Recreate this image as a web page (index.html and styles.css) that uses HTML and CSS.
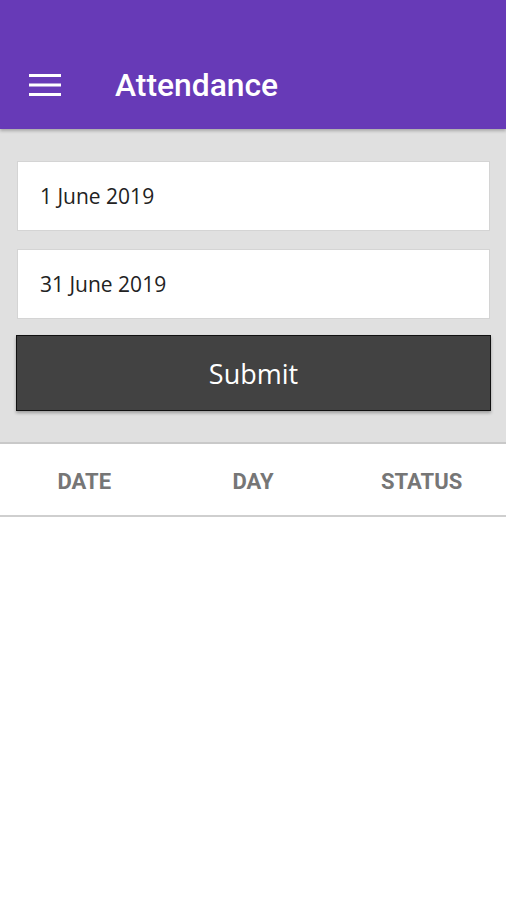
FILE: index.html
```html
<!DOCTYPE html>
<html lang="en">

<head>
    <meta charset="UTF-8">
    <title>Attendance</title>
    <link rel="stylesheet" href="styles.css">
</head>

<body>
    <header class="app-bar">
        <button class="menu-button" aria-label="Menu">
            <svg width="32" height="22" viewBox="0 0 32 22">
                <rect x="0" y="0" width="32" height="3" fill="#fff" />
                <rect x="0" y="9.5" width="32" height="3" fill="#fff" />
                <rect x="0" y="19" width="32" height="3" fill="#fff" />
            </svg>
        </button>
        <h1 class="title">Attendance</h1>
    </header>

    <div class="filter-panel">
        <div class="date-field">1 June 2019</div>
        <div class="date-field">31 June 2019</div>
        <button class="submit-button">Submit</button>
    </div>

    <div class="table-head">
        <div class="col">DATE</div>
        <div class="col">DAY</div>
        <div class="col">STATUS</div>
    </div>
</body>

</html>
```

FILE: styles.css
```css
body {
    margin: 0;
    background-color: #ffffff;
    font-family: "Open Sans", "Noto Sans", sans-serif;
}

.app-bar {
    height: 129px;
    background-color: #673ab7;
    display: flex;
    align-items: flex-end;
    padding: 0 0 27px 29px;
    box-sizing: border-box;
    box-shadow: 0 2px 3px rgba(0, 0, 0, 0.25);
    position: relative;
    z-index: 1;
}

.menu-button {
    background: none;
    border: none;
    padding: 0;
    width: 32px;
    height: 22px;
    margin-bottom: 6px;
    display: flex;
}

.title {
    margin: 0 0 0 54px;
    font-family: Roboto, "Liberation Sans", sans-serif;
    font-weight: 500;
    font-size: 31.8px;
    line-height: 1;
    color: #ffffff;
}

.filter-panel {
    background-color: #e0e0e0;
    padding: 32px 15px 31px 16px;
    display: flex;
    flex-direction: column;
    border-bottom: 2px solid #c9c9c9;
}

.date-field {
    background: #ffffff;
    border: 1px solid #d4d4d4;
    height: 68px;
    margin: 0 1px 18px 1px;
    padding-left: 22px;
    display: flex;
    align-items: center;
    font-size: 21px;
    color: #222222;
}

.date-field + .date-field {
    margin-bottom: 16px;
}

.submit-button {
    height: 76px;
    background-color: #424242;
    border: 1px solid #111111;
    color: #ffffff;
    font-family: "Open Sans", "Noto Sans", sans-serif;
    font-size: 27px;
    box-shadow: 0 2px 3px rgba(0, 0, 0, 0.3);
    padding: 0;
}

.table-head {
    display: grid;
    grid-template-columns: 1fr 1fr 1fr;
    height: 73px;
    box-sizing: border-box;
    padding-top: 3px;
    align-items: center;
    border-bottom: 2px solid #cfcfcf;
}

.col {
    text-align: center;
    font-family: Roboto, "Liberation Sans", sans-serif;
    font-weight: 700;
    font-size: 22px;
    color: #767676;
}
```
